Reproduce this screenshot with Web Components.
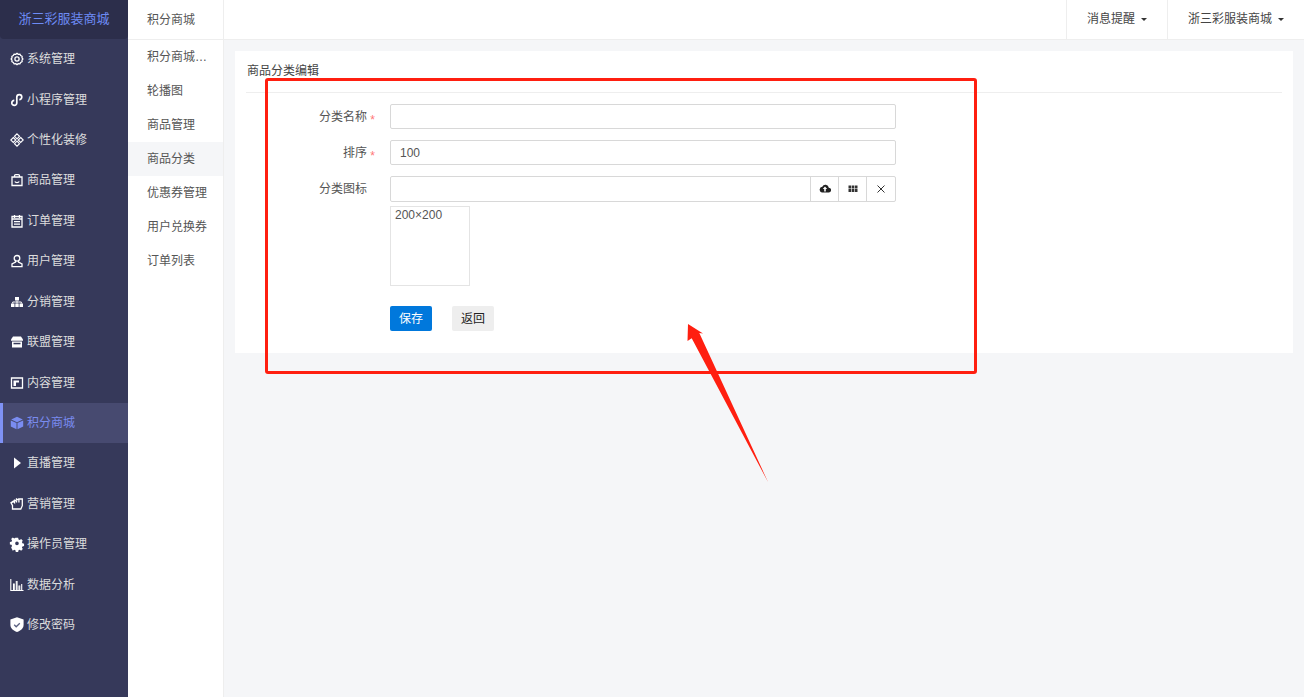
<!DOCTYPE html>
<html lang="zh"><head><meta charset="utf-8"><title>商品分类编辑</title>
<style>
html,body{margin:0;height:100%;overflow:hidden}
body{font:12px/1.5 "Liberation Sans","Noto Sans CJK SC",sans-serif;color:#555;background:#f5f6f8}
</style></head><body>
<app-shell>
  <side-nav slot="side" title-text="浙三彩服装商城">
    <nav-item icon="gear">系统管理</nav-item>
    <nav-item icon="mini">小程序管理</nav-item>
    <nav-item icon="deco">个性化装修</nav-item>
    <nav-item icon="bag">商品管理</nav-item>
    <nav-item icon="order">订单管理</nav-item>
    <nav-item icon="user">用户管理</nav-item>
    <nav-item icon="tree">分销管理</nav-item>
    <nav-item icon="store">联盟管理</nav-item>
    <nav-item icon="content">内容管理</nav-item>
    <nav-item icon="cube" active>积分商城</nav-item>
    <nav-item icon="play">直播管理</nav-item>
    <nav-item icon="hand">营销管理</nav-item>
    <nav-item icon="cog">操作员管理</nav-item>
    <nav-item icon="chart">数据分析</nav-item>
    <nav-item icon="shield">修改密码</nav-item>
  </side-nav>
  <top-bar slot="top" title-text="积分商城">
    <top-menu>消息提醒</top-menu>
    <top-menu>浙三彩服装商城</top-menu>
  </top-bar>
  <sub-nav slot="sub">
    <sub-item>积分商城…</sub-item>
    <sub-item>轮播图</sub-item>
    <sub-item>商品管理</sub-item>
    <sub-item active>商品分类</sub-item>
    <sub-item>优惠券管理</sub-item>
    <sub-item>用户兑换券</sub-item>
    <sub-item>订单列表</sub-item>
  </sub-nav>
  <form-card slot="main" title-text="商品分类编辑">
    <form-field label="分类名称" required><text-box></text-box></form-field>
    <form-field label="排序" required><text-box value="100"></text-box></form-field>
    <form-field label="分类图标"><image-picker hint="200×200"></image-picker></form-field>
    <form-actions>
      <x-button primary>保存</x-button>
      <x-button>返回</x-button>
    </form-actions>
  </form-card>
  <note-overlay slot="overlay"></note-overlay>
</app-shell>
<script>
const ICONS={
gear:'<path fill="none" stroke="currentColor" stroke-width="1.3" d="M7 1.400l1.300.9 1.600-.1.800 1.300 1.400.8-.1 1.600.9 1.100-.9 1.100.1 1.600-1.400.8-.8 1.300-1.600-.1L7 12.600l-1.300-.9-1.600.1-.8-1.300-1.400-.8.1-1.600L1.100 7l.9-1.100-.1-1.600 1.400-.8.8-1.300 1.600.1z"/><circle cx="7" cy="7" r="2.100" fill="none" stroke="currentColor" stroke-width="1.300"/>',
mini:'<path fill="none" stroke="currentColor" stroke-width="1.700" d="M4.300 7.400a2.500 2.500 0 1 0 2.500 2.500V4.100a2.500 2.500 0 1 1 2.500 2.500"/>',
deco:'<path fill="none" stroke="currentColor" stroke-width="1.100" d="M7 .8l2.500 2.500L7 5.800 4.500 3.300zM3.300 4.500L5.800 7 3.300 9.500.8 7zM10.700 4.500L13.200 7l-2.500 2.500L8.200 7zM7 8.200l2.500 2.500L7 13.200l-2.500-2.500z"/>',
bag:'<path fill="none" stroke="currentColor" stroke-width="1.300" d="M2 4h10v8.500H2zM4.500 4V2.800A1.200 1.200 0 0 1 5.700 1.600h2.600a1.200 1.200 0 0 1 1.200 1.200V4M4.800 8.500c.8 1.500 3.600 1.500 4.400 0"/>',
order:'<path fill="none" stroke="currentColor" stroke-width="1.300" d="M2 2.500h10v10.500H2zM4.500 1v3M9.500 1v3M2 5h10M4 7.700h6M4 10.200h6"/>',
user:'<circle cx="7" cy="4.300" r="2.800" fill="none" stroke="currentColor" stroke-width="1.300"/><path fill="none" stroke="currentColor" stroke-width="1.300" d="M5.500 7v1.200L2 10v2.700h10V10L8.500 8.200V7"/>',
tree:'<path fill="currentColor" d="M5 2h4v3.500H5zM1 8.500h3.500V12H1zM5.300 8.500h3.400V12H5.300zM9.500 8.500H13V12H9.500z"/><path fill="none" stroke="currentColor" d="M2.700 8.500V7h8.600v1.500M7 5.500v3"/>',
store:'<path fill="currentColor" d="M3 1.500h8l2 3v1.300H1V4.500z"/><path fill="currentColor" d="M2 6.500h10v6H2z"/><path fill="#36395a" d="M3.500 7.800h7v1.500h-7z"/>',
content:'<path fill="none" stroke="currentColor" stroke-width="1.300" d="M1.500 2h11v10h-11z"/><path fill="currentColor" d="M3.500 4.500H9v2H6v3.500H3.500z"/>',
cube:'<path fill="#7a8cf0" d="M7 .8l5.800 2.700L7 6.200 1.200 3.500zM.8 4.400l5.700 2.700v6.200L.8 10.600zM13.200 4.400v6.200l-5.700 2.700V7.100z"/>',
play:'<path fill="currentColor" d="M4 1.500L11 7l-7 5.500z"/>',
hand:'<path fill="none" stroke="currentColor" stroke-width="1.300" d="M1 5.800l2.300-1.600 1.200 1.300V2.500M6.500 1.200v4.300M8.900 1.200v4.300M8.900 2h3.400v6.700L10.800 12H2.500V8.500L1 5.800z"/>',
cog:'<path fill="currentColor" fill-rule="evenodd" d="M5.700.5h2.600l.4 1.800 1.300.6 1.600-1 1.800 1.800-1 1.600.6 1.300 1.800.4v2.600l-1.800.4-.6 1.300 1 1.600-1.800 1.800-1.600-1-1.300.6-.4 1.800H5.700l-.4-1.800-1.300-.6-1.600 1L.6 11.200l1-1.600L1 8.300-.8 7.900V5.300L1 4.900l.6-1.300-1-1.600L2.400.2l1.600 1 1.300-.6zM7 4.700a2.000 2.000 0 1 0 0 4 2.000 2.000 0 0 0 0-4z" transform="translate(.6 .3) scale(.91)"/>',
chart:'<path fill="none" stroke="currentColor" stroke-width="1.100" d="M.8 1v11.500h12.700M3.500 12V5.500M6.300 12V3M9 12V7.500M11.700 12V6"/><path fill="none" stroke="currentColor" d="M4.300 12V5.500M7.100 12V3M9.800 12V7.500"/>',
shield:'<path fill="currentColor" d="M7-.8l6.600 2.200v5.300c0 3.400-2.800 5.900-6.600 7.300-3.800-1.400-6.600-3.900-6.600-7.300V1.400z"/><path fill="none" stroke="#5a6080" stroke-width="1.300" d="M4.200 6.800l2 2 3.600-3.600"/>'
};
function def(name,css,html,init){
  customElements.define(name,class extends HTMLElement{
    constructor(){super();this.attachShadow({mode:'open'})}
    connectedCallback(){
      const h=typeof html==='function'?html(this):html;
      this.shadowRoot.innerHTML='<style>'+css+'</style>'+h;
      if(init)init(this);
    }
  });
}
const esc=s=>s==null?'':s;
def('app-shell',`
  :host{display:grid;grid-template-columns:128px 96px 1fr;grid-template-rows:40px 1fr;width:100vw;height:100vh;position:relative;background:#f5f6f8}
  ::slotted([slot=side]){grid-row:1/3;grid-column:1}
  ::slotted([slot=top]){grid-row:1;grid-column:2/4}
  ::slotted([slot=sub]){grid-row:2;grid-column:2}
  ::slotted([slot=main]){grid-row:2;grid-column:3;align-self:start;margin:11px 11px 0 11px}
`,`<slot name="side"></slot><slot name="top"></slot><slot name="sub"></slot><slot name="main"></slot><slot name="overlay"></slot>`);
def('side-nav',`
  :host{display:block;background:#36395a;color:#ddd}
  .logo{height:39px;box-sizing:border-box;padding-bottom:2px;display:flex;align-items:center;justify-content:center;background:#2c2e4b;color:#6d8bf5;font-size:13px;border-radius:0 0 4px 4px}
  .list{display:flex;flex-direction:column}
`,e=>`<div class="logo">${esc(e.getAttribute('title-text'))}</div><div class="list"><slot></slot></div>`);
def('nav-item',`
  :host{display:flex;align-items:center;height:40.43px;padding-left:10px;gap:3px;box-sizing:border-box;white-space:nowrap;color:#ddd;position:relative}
  :host([active]){background:#474a70;color:#7a8cf0;box-shadow:inset 3px 0 0 #7f92f5}
  svg{width:14px;height:14px;flex:none;color:#fff;overflow:visible}
  :host([active]) svg{color:#7a8cf0}
`,e=>`<svg viewBox="0 0 14 14">${ICONS[e.getAttribute('icon')]||''}</svg><span><slot></slot></span>`);
def('top-bar',`
  :host{display:flex;background:#fff;border-bottom:1px solid #eee;box-sizing:border-box;height:40px;color:#555}
  .t{width:96px;box-sizing:border-box;padding-left:19px;border-right:1px solid #eee;line-height:40px;height:39px}
  .s{flex:1}
`,e=>`<div class="t">${esc(e.getAttribute('title-text'))}</div><div class="s"></div><slot></slot>`);
def('top-menu',`
  :host{display:flex;align-items:center;gap:6px;padding:0 20px;border-left:1px solid #eee;color:#444;height:39px;line-height:37px}
  i{width:0;height:0;border:3px solid transparent;border-top:3px solid #333;border-bottom:0;margin-top:0}
`,`<slot></slot><i></i>`);
def('sub-nav',`
  :host{display:block;background:#fff;border-right:1px solid #eee;box-sizing:border-box}
`,`<slot></slot>`);
def('sub-item',`
  :host{display:block;height:34px;line-height:35px;padding-left:19px;color:#555;white-space:nowrap}
  :host([active]){background:#f5f6f8}
`,`<slot></slot>`);
def('form-card',`
  :host{display:block;background:#fff;box-sizing:border-box;padding:0 11px;height:302px}
  .h{height:42px;line-height:41px;border-bottom:1px solid #eee;color:#444;padding:0 1px;box-sizing:border-box}
  .b{padding-top:11px;display:flex;flex-direction:column;gap:11px}
`,e=>`<div class="h">${esc(e.getAttribute('title-text'))}</div><div class="b"><slot></slot></div>`);
def('form-field',`
  :host{display:flex;align-items:flex-start}
  .l{width:144px;height:25px;box-sizing:border-box;display:flex;justify-content:flex-end;line-height:27px;color:#555;flex:none;padding-right:23px;position:relative}
  .s{position:absolute;right:15px;top:3px;color:#f77;font-size:12px}
  .c{flex:1;width:506px;max-width:506px}
`,e=>`<div class="l">${esc(e.getAttribute('label'))}${e.hasAttribute('required')?'<span class="s">*</span>':''}</div><div class="c"><slot></slot></div>`);
def('text-box',`
  :host{display:block}
  input{display:block;width:100%;height:25px;box-sizing:border-box;border:1px solid #d8d8d8;border-radius:2px;padding:0 9px;font:12px "Liberation Sans","Noto Sans CJK SC",sans-serif;color:#555;outline:0;background:#fff}
`,e=>`<input type="text" value="${esc(e.getAttribute('value'))}">`);
def('image-picker',`
  :host{display:block}
  .r{display:flex;height:26px;box-sizing:border-box;border:1px solid #d8d8d8;border-radius:2px}
  .i{flex:1}
  .b{width:28px;box-sizing:border-box;display:flex;align-items:center;justify-content:center;border-left:1px solid #d8d8d8;color:#333}
  svg{width:12px;height:12px}
  .p{width:80px;height:80px;box-sizing:border-box;border:1px solid #e4e4e4;margin-top:4px;padding-left:4px;line-height:16px;color:#555}
`,e=>`<div class="r"><div class="i"></div>
<div class="b"><svg viewBox="0 0 12 12"><path fill="#222" d="M9.800 4.700A3.400 3.400 0 0 0 3.300 3.800 2.900 2.900 0 0 0 2.800 9.500h6.700a2.400 2.400 0 0 0 .3-4.800z"/><path fill="#fff" d="M6 3.600L8.200 6H6.800v2.500H5.200V6H3.800z"/></svg></div>
<div class="b"><svg viewBox="0 0 12 12"><path fill="#333" d="M1.500 2.500h2.600v2.900H1.500zM4.700 2.500h2.600v2.900H4.700zM7.900 2.500h2.600v2.900H7.900zM1.500 6h2.600v2.900H1.500zM4.700 6h2.600v2.900H4.700zM7.900 6h2.600v2.900H7.900z"/></svg></div>
<div class="b" style="width:29px"><svg viewBox="0 0 12 12"><path fill="none" stroke="#333" d="M2.500 2.500l7 7M9.500 2.500l-7 7"/></svg></div></div>
<div class="p">${esc(e.getAttribute('hint'))}</div>`);
def('form-actions',`
  :host{display:flex;gap:20px;padding-left:144px;margin-top:9px}
`,`<slot></slot>`);
def('x-button',`
  :host{display:flex;align-items:center;justify-content:center;width:42px;height:25px;border-radius:2px;background:#eee;color:#222;white-space:nowrap}
  :host([primary]){background:#0078dc;color:#fff}
`,`<slot></slot>`);
def('note-overlay',`
  :host{position:absolute;inset:0;pointer-events:none;display:block}
  .rect{position:absolute;left:265px;top:78px;width:712px;height:296px;box-sizing:border-box;border:3px solid #ff1f10;border-radius:3px}
  svg{position:absolute;left:0;top:0;width:1304px;height:697px}
`,`<div class="rect"></div><svg viewBox="0 0 1304 697"><polygon fill="#ff1f10" points="688,324 703,333.500 699.300,333 768,482 691.700,338.300 687.500,341"/></svg>`);
</script>
</body></html>
